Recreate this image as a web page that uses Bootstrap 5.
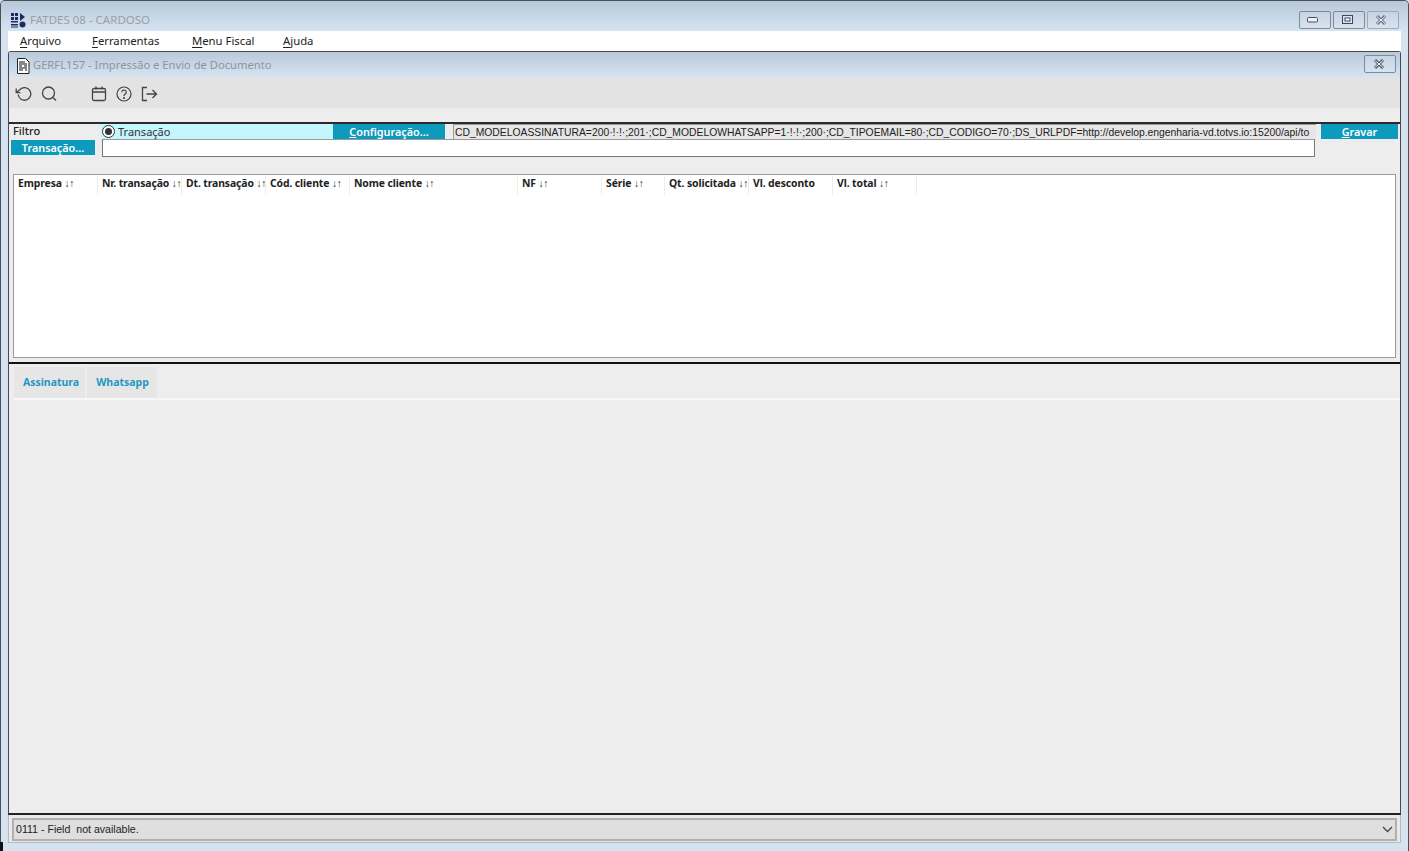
<!DOCTYPE html>
<html lang="pt">
<head>
<meta charset="utf-8">
<title>FATDES 08 - CARDOSO</title>
<link rel="stylesheet" href="https://cdn.jsdelivr.net/npm/bootstrap@5.3.0/dist/css/bootstrap.min.css">
<style>
html,body{height:851px;margin:0;overflow:hidden}
body{background:#d6e4f2;font-family:"Noto Sans","Open Sans",sans-serif;font-size:11px;color:#111}
.win{width:1409px;height:851px;border:1px solid #4a5058;border-bottom:0;border-radius:5px 5px 0 0;background:#d5e3f1;overflow:hidden}
.wtitle{height:30px;padding:7px 0 0 9px;background:linear-gradient(#b7c8d8,#d6e4f2);color:#9a9fa5;font-size:11.5px}
.wtitle svg{margin-right:4px}
.wbtns{padding-right:9px;gap:2px}
.wbtn{width:32px;height:18px;border:1px solid #7f8a99;border-radius:2px;background:linear-gradient(#c6d4e2,#d7e3ef);display:flex;align-items:center;justify-content:center;padding:0}
.wbtn.dim{border-color:#a0a9b6}
.shell{margin:0 7px 0 7px;height:820px}
.mbar{height:20px;background:#fff;padding-left:12px;font-size:11.3px;color:#222}
.mbar span{display:block}
.mbar u{text-decoration-thickness:1px;text-underline-offset:2px}
.mdi{height:764px;border:1px solid #4a4a4a;border-bottom:2px solid #222;border-radius:3px 3px 0 0;background:#ededed}
.ctitle{height:25px;padding-left:7px;padding-top:2px;background:linear-gradient(#b8c9d9,#d6e4f2);color:#8f9499;font-size:11.2px}
.ctitle svg{margin-right:3px}
.ctitle .wbtn{margin-right:4px;margin-top:-3px}
.tools{height:31px;background:#e3e3e3;padding:2px 0 0 5px}
.tools svg{display:block;flex:none}
.ic-gap{margin-left:7px}
.ic-gap1{margin-left:8px}
.ic-gap2{margin-left:32px}
.filtro{height:50px;margin-top:14px;border-top:2px solid #2b2b2b}
.frow{display:flex;height:16px}
.flabel{width:90px;padding-left:4px;font-weight:500;line-height:14px;color:#222}
.fradio{width:232px;background:#c4f6fd;display:flex;align-items:center;padding-left:1px;gap:3px;line-height:14px;color:#333;margin-left:2px;height:15px}
.radio-o{width:13px;height:13px;border:1px solid #333;border-radius:50%;background:#fff;display:flex;align-items:center;justify-content:center;flex:none}
.radio-o i{display:block;width:7px;height:7px;border-radius:50%;background:#333}
.tealbtn{background:#0d9abd;color:#fff;text-align:center;font-weight:600;font-size:10.8px;line-height:15px;height:15px}
.cfg{width:112px;height:15px}
.gap8{width:8px}
.cfgval{width:863px;height:15px;background:#e6e6e6;border:1px solid #999;border-width:1px 0 0 1px;font:10.35px/15px "Liberation Sans",sans-serif;color:#222;padding-left:1px;white-space:nowrap;overflow:hidden}
.grv{width:77px;margin-left:5px}
.trn{width:84px;margin-left:2px}
.trninput{width:1213px;height:18px;margin-left:7px;background:#fff;border:1px solid #777;border-top-color:#999;margin-top:-1px}
.grid1{height:184px;margin:2px 4px 0 4px;border:1px solid #9a9a9a;background:#fff;display:flex;align-items:flex-start}
.hcell{height:20px;border-right:1px solid #ededed;padding-left:4px;font-weight:700;font-size:10.4px;line-height:17px;white-space:nowrap;overflow:hidden;color:#222;letter-spacing:-.1px}
.hcell small{font-size:10.4px;font-weight:700;color:#333;letter-spacing:-.5px}
.sep{margin-top:4px;border-top:2px solid #111;height:0}
.tabsbar{margin:3px 0 0 5px;display:flex;gap:2px;height:33px;border-bottom:2px solid #f7f7f7}
.tabx{background:#e6e6e6;color:#1f97c4;font-weight:700;font-size:10.5px;line-height:31px;text-align:center;height:31px}
.tab-a{width:71px;padding-left:3px}
.tab-w{width:70px;padding-left:1px}
.fill{flex:1}
.status{height:28px;border:1px solid #b9b9b9;border-top:0;padding:3px;background:#e9e9e9}
.sbox{height:23px;border:2px solid #b0b0b0;background:#dfdfdf;font:10.6px/19px "Liberation Sans",sans-serif;color:#222;padding:0 2px 0 2px}
.blk{position:absolute;left:0;top:842px;width:3px;height:9px;background:#111}
</style>
</head>
<body>
<div class="win d-flex flex-column">
  <div class="wtitle d-flex align-items-center flex-shrink-0">
    <svg width="16" height="16" viewBox="0 0 16 16"><g fill="#1d2b5e"><rect x="1" y="1" width="3" height="3"/><rect x="5" y="1" width="3" height="3"/><rect x="1" y="5" width="3" height="3"/><rect x="5" y="5" width="3" height="3"/><rect x="1" y="9" width="7" height="1.5"/><rect x="1" y="12" width="7" height="1.5"/><rect x="1" y="14.5" width="7" height="1"/><path d="M10 1l5 4-5 4z"/><circle cx="12.5" cy="12.5" r="3"/></g></svg>
    <span>FATDES 08 - CARDOSO</span>
    <div class="wbtns d-flex ms-auto">
      <button class="wbtn" type="button" aria-label="min"><svg width="12" height="6" viewBox="0 0 12 6"><rect x=".5" y=".5" width="10" height="4.5" rx="1" fill="#eef2f7" stroke="#4a4a68"/></svg></button>
      <button class="wbtn" type="button" aria-label="max"><svg width="11" height="10" viewBox="0 0 11 10"><rect x=".5" y=".5" width="10" height="8" fill="#dbe5ef" stroke="#3d4464"/><rect x="3" y="3" width="5" height="3" fill="#fff" stroke="#3d4464"/></svg></button>
      <button class="wbtn dim" type="button" aria-label="fechar"><svg width="14" height="10" viewBox="0 0 14 10"><path d="M3 1l8 8M11 1l-8 8" fill="none" stroke="#6c7188" stroke-width="3"/><path d="M3 1.500l8 7M11 1.500l-8 7" stroke="#f4f6f9" stroke-width="1"/></svg></button>
    </div>
  </div>
  <div class="shell d-flex flex-column flex-shrink-0">
    <div class="mbar d-flex align-items-center flex-shrink-0">
      <span style="width:72px"><u>A</u>rquivo</span><span style="width:100px"><u>F</u>erramentas</span><span style="width:91px"><u>M</u>enu Fiscal</span><span><u>A</u>juda</span>
    </div>
    <div class="mdi d-flex flex-column flex-shrink-0">
      <div class="ctitle d-flex align-items-center flex-shrink-0">
        <svg width="14" height="16" viewBox="0 0 14 16"><path d="M1.500.5h8l3.500 3.500v11.500h-11.500z" fill="#fff" stroke="#222"/><path d="M3 4h6M3 6h8M3 8h3M8 8h3M3 10h8M3 12h4M9 12h2" stroke="#111" stroke-width="1.200"/></svg>
        <span>GERFL157 - Impressão e Envio de Documento</span>
        <button class="wbtn ms-auto" type="button" aria-label="fechar"><svg width="14" height="10" viewBox="0 0 14 10"><path d="M3 1l8 8M11 1l-8 8" fill="none" stroke="#50566e" stroke-width="3"/><path d="M3 1.500l8 7M11 1.500l-8 7" stroke="#f4f6f9" stroke-width="1"/></svg></button>
      </div>
      <div class="tools d-flex align-items-center flex-shrink-0">
        <svg width="18" height="18" viewBox="0 0 18 18" fill="none" stroke="#444" stroke-width="1.300"><path d="M4.200 9.500A6.300 6.300 0 1 0 6 4.500L2.500 7.500"/><path d="M2.200 3.500v4.200h4.200"/></svg>
        <svg class="ic-gap1" width="18" height="18" viewBox="0 0 18 18" fill="none" stroke="#444" stroke-width="1.300"><circle cx="8.500" cy="8" r="6"/><path d="M13 12.500l3 3"/></svg>
        <svg class="ic-gap2" width="18" height="18" viewBox="0 0 18 18" fill="none" stroke="#444" stroke-width="1.300"><rect x="2.500" y="3.500" width="13" height="12" rx="1.500"/><path d="M2.500 7h13M6 1.500v3M12 1.500v3"/></svg>
        <svg class="ic-gap" width="18" height="18" viewBox="0 0 18 18" fill="none" stroke="#444" stroke-width="1.200"><circle cx="9" cy="9" r="7"/><path d="M6.800 7.200a2.200 2.200 0 1 1 3.400 1.900c-.8.500-1.200.9-1.200 1.900"/><circle cx="9" cy="13" r=".5"/></svg>
        <svg class="ic-gap" width="18" height="18" viewBox="0 0 18 18" fill="none" stroke="#444" stroke-width="1.300"><path d="M7 2.500H2.500v13H7M6.500 9h10M12.500 5l4 4-4 4"/></svg>
      </div>
      <div class="filtro flex-shrink-0">
        <div class="frow">
          <div class="flabel">Filtro</div>
          <div class="fradio"><span class="radio-o"><i></i></span><span>Transação</span></div>
          <div class="tealbtn cfg"><u>C</u>onfiguração...</div>
          <div class="gap8"></div>
          <div class="cfgval">CD_MODELOASSINATURA=200·!·!·;201·;CD_MODELOWHATSAPP=1·!·!·;200·;CD_TIPOEMAIL=80·;CD_CODIGO=70·;DS_URLPDF=http://develop.engenharia-vd.totvs.io:15200/api/to</div>
          <div class="tealbtn grv"><u>G</u>ravar</div>
        </div>
        <div class="frow">
          <div class="tealbtn trn">Transação...</div>
          <div class="trninput"></div>
        </div>
      </div>
      <div class="grid1 flex-shrink-0">
        <div class="hcell" style="width:84px">Empresa <small>↓↑</small></div>
        <div class="hcell" style="width:84px">Nr. transação <small>↓↑</small></div>
        <div class="hcell" style="width:84px">Dt. transação <small>↓↑</small></div>
        <div class="hcell" style="width:84px">Cód. cliente <small>↓↑</small></div>
        <div class="hcell" style="width:168px">Nome cliente <small>↓↑</small></div>
        <div class="hcell" style="width:84px">NF <small>↓↑</small></div>
        <div class="hcell" style="width:63px">Série <small>↓↑</small></div>
        <div class="hcell" style="width:84px">Qt. solicitada <small>↓↑</small></div>
        <div class="hcell" style="width:84px">Vl. desconto</div>
        <div class="hcell" style="width:84px">Vl. total <small>↓↑</small></div>
      </div>
      <div class="sep flex-shrink-0"></div>
      <div class="tabsbar flex-shrink-0">
        <div class="tabx tab-a">Assinatura</div>
        <div class="tabx tab-w">Whatsapp</div>
      </div>
      <div class="fill"></div>
    </div>
    <div class="status flex-shrink-0">
      <div class="sbox d-flex align-items-center justify-content-between">
        <span>0111 - Field&nbsp; not available.</span>
        <svg width="11" height="7" viewBox="0 0 11 7"><path d="M1 1l4.500 4.500L10 1" fill="none" stroke="#444" stroke-width="1.300"/></svg>
      </div>
    </div>
  </div>
</div>
<div class="blk"></div>
<script src="https://cdn.jsdelivr.net/npm/bootstrap@5.3.0/dist/js/bootstrap.bundle.min.js"></script>
</body>
</html>
